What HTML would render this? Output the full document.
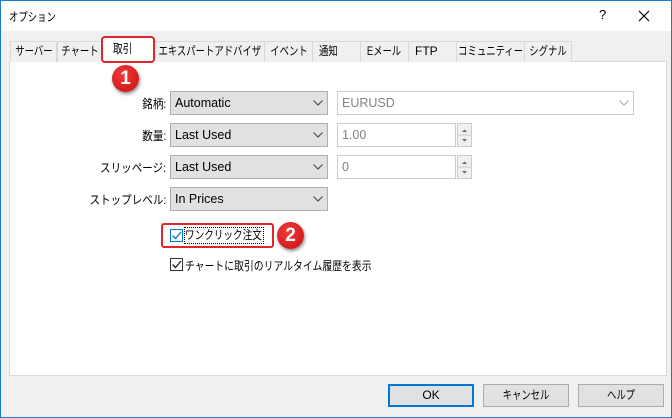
<!DOCTYPE html>
<html><head><meta charset="utf-8"><style>
*{box-sizing:border-box;margin:0;padding:0}
body{width:672px;height:418px;overflow:hidden;background:#f0f0f0;font-family:"Liberation Sans","Noto Sans CJK JP",sans-serif;font-size:12px;color:#000;position:relative;white-space:nowrap}
.a{position:absolute}
.n{display:inline-block;transform:scaleX(.78);transform-origin:left center}
.nc{display:inline-block;transform:scaleX(.78);transform-origin:center;flex:none}
.nr{display:inline-block;transform:scaleX(.88);transform-origin:right center}
.win{left:0;top:0;width:672px;height:418px;border:1px solid #1979ca}
.title{left:1px;top:1px;width:670px;height:30px;background:#fff}
.tab{position:absolute;top:41px;height:21px;border:1px solid #d9d9d9;border-bottom:none;background:#f0f0f0;display:flex;justify-content:center;line-height:19px;font-size:12px}
.panel{left:9px;top:61px;width:658px;height:315px;background:#fff;border:1px solid #d9d9d9}
.combo{position:absolute;height:24px;background:#e1e1e1;border:1px solid #adadad;padding-left:4px;line-height:22px;font-size:12.5px}
.combo svg{position:absolute;right:4px;top:8px}
.lbl{position:absolute;text-align:right;width:166px;left:0;font-size:12px}
.inp{position:absolute;height:24px;border:1px solid #ccc;background:#fff;color:#838383;padding-left:4px;line-height:22px;font-size:12.5px}
.spin{position:absolute;width:15px;height:24px;border:1px solid #ccc;background:#f0f0f0}
.cb{position:absolute;width:13px;height:13px;border:1px solid #333;background:#fff}
.btn{position:absolute;top:384px;width:86px;height:23px;border:1px solid #adadad;background:#e1e1e1;display:flex;justify-content:center;line-height:21px}
.badge{position:absolute;width:27px;height:27px;border-radius:50%;background:radial-gradient(circle at 40% 35%,#f23a3a,#c90f0f);color:#fff;font-weight:bold;font-size:19px;text-align:center;line-height:27px;box-shadow:1px 2px 3px rgba(0,0,0,.45)}
</style></head><body>
<div class="a win"></div>
<div class="a title"></div>
<div class="a" style="left:9px;top:8px;font-size:12px"><span class="n">オプション</span></div>
<div class="a" style="left:599px;top:7px;font-size:13px">?</div>
<svg class="a" style="left:638px;top:10px" width="12" height="12"><path d="M1 1L11 11M11 1L1 11" stroke="#000" stroke-width="1.2"/></svg>
<div class="a panel"></div>
<div class="tab" style="left:10px;width:47px"><span class="nc">サーバー</span></div>
<div class="tab" style="left:57px;width:45px"><span class="nc">チャート</span></div>
<div class="tab" style="left:154px;width:111px"><span class="nc">エキスパートアドバイザ</span></div>
<div class="tab" style="left:264px;width:49px"><span class="nc">イベント</span></div>
<div class="tab" style="left:312px;width:49px;justify-content:flex-start;padding-left:6px"><span class="n">通知</span></div>
<div class="tab" style="left:360px;width:49px"><span class="nc">Eメール</span></div>
<div class="tab" style="left:408px;width:49px;justify-content:flex-start;padding-left:6px">FTP</div>
<div class="tab" style="left:456px;width:69px"><span class="nc">コミュニティー</span></div>
<div class="tab" style="left:524px;width:48px"><span class="nc">シグナル</span></div>
<div class="a" style="left:101px;top:36px;width:54px;height:27px;background:#fff;border:2px solid #e3262b;border-radius:4px;padding-left:10px;line-height:22px;font-size:12.5px"><span class="n">取引</span></div>
<div class="badge" style="left:112px;top:65px">1</div>

<div class="lbl" style="top:95px"><span class="nr">銘柄:</span></div>
<div class="combo" style="left:170px;top:91px;width:158px">Automatic<svg width="10" height="6"><path d="M0.5 0.5L5 5L9.5 0.5" fill="none" stroke="#444"/></svg></div>
<div class="inp" style="left:337px;top:91px;width:297px">EURUSD<svg style="position:absolute;right:4px;top:8px" width="10" height="6"><path d="M0.5 0.5L5 5L9.5 0.5" fill="none" stroke="#aaa"/></svg></div>

<div class="lbl" style="top:127px"><span class="nr">数量:</span></div>
<div class="combo" style="left:170px;top:123px;width:158px">Last Used<svg width="10" height="6"><path d="M0.5 0.5L5 5L9.5 0.5" fill="none" stroke="#444"/></svg></div>
<div class="inp" style="left:337px;top:123px;width:119px">1.00</div>
<div class="spin" style="left:457px;top:123px"><svg width="13" height="22"><path d="M4 8L6.5 5.5L9 8Z M4 15L6.5 17.5L9 15Z" fill="#666"/><path d="M0 11H13" stroke="#ccc"/></svg></div>

<div class="lbl" style="top:159px"><span class="nr">スリッページ:</span></div>
<div class="combo" style="left:170px;top:155px;width:158px">Last Used<svg width="10" height="6"><path d="M0.5 0.5L5 5L9.5 0.5" fill="none" stroke="#444"/></svg></div>
<div class="inp" style="left:337px;top:155px;width:119px">0</div>
<div class="spin" style="left:457px;top:155px"><svg width="13" height="22"><path d="M4 8L6.5 5.5L9 8Z M4 15L6.5 17.5L9 15Z" fill="#666"/><path d="M0 11H13" stroke="#ccc"/></svg></div>

<div class="lbl" style="top:191px"><span class="nr">ストップレベル:</span></div>
<div class="combo" style="left:170px;top:187px;width:158px">In Prices<svg width="10" height="6"><path d="M0.5 0.5L5 5L9.5 0.5" fill="none" stroke="#444"/></svg></div>

<div class="a" style="left:161px;top:223px;width:113px;height:25px;border:2px solid #e3262b;border-radius:3px"></div>
<div class="cb" style="left:170px;top:229px;border-color:#0078d7"><svg width="11" height="11" style="position:absolute;left:0;top:0"><path d="M1.5 5.5L4.5 8.5L10 2" fill="none" stroke="#0078d7" stroke-width="1.3"/></svg></div>
<div class="a" style="left:184px;top:227px;width:80px;height:17px;border:1px dotted #000;line-height:15px;overflow:hidden"><span class="n" style="transform:scaleX(.8)">ワンクリック注文</span></div>
<div class="badge" style="left:277px;top:222px">2</div>

<div class="cb" style="left:170px;top:258px"><svg width="11" height="11" style="position:absolute;left:0;top:0"><path d="M1.5 5.5L4.5 8.5L10 2" fill="none" stroke="#222" stroke-width="1.3"/></svg></div>
<div class="a" style="left:185px;top:257px"><span class="n" style="transform:scaleX(.82)">チャートに取引のリアルタイム履歴を表示</span></div>

<div class="btn" style="left:388px;border:2px solid #0078d7;line-height:19px">OK</div>
<div class="btn" style="left:483px"><span class="nc">キャンセル</span></div>
<div class="btn" style="left:578px"><span class="nc">ヘルプ</span></div>
</body></html>
